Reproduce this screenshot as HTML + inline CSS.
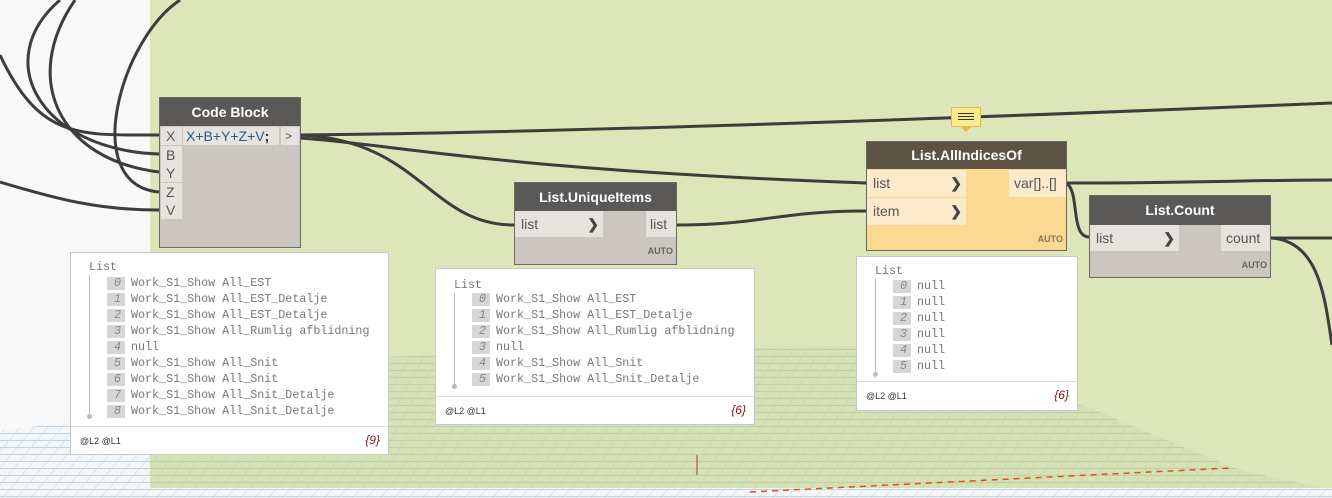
<!DOCTYPE html>
<html><head><meta charset="utf-8">
<style>
*{margin:0;padding:0;box-sizing:border-box}
body{width:1332px;height:498px;overflow:hidden;position:relative;background:#dce6b9;font-family:"Liberation Sans",sans-serif}
.abs{position:absolute}
.node{position:absolute;border:1px solid #6a6a6a;background:#cbc6c0}
.hdr{position:absolute;left:0;right:0;top:0;background:#5b5957;color:#fff;font-weight:bold;font-size:14px;text-align:center}
.port{position:absolute;background:#e6e2dd;color:#555;font-size:14px;padding-left:6px}
.chev{position:absolute;right:4px;top:0;font-weight:bold;color:#444}
.auto{position:absolute;right:3px;font-size:9px;font-weight:bold;color:#666}
.watch{position:absolute;background:#fff;border:1px solid #c8c8c8;font-family:"Liberation Mono",monospace;font-size:11.7px;color:#777}
.watch .row{position:absolute;height:13px;line-height:13px;white-space:pre}
.watch .ix{display:inline-block;width:18px;background:#d6d6d6;text-align:right;padding-right:4px;font-style:italic;margin-right:6px;color:#888}
.foot{position:absolute;left:0;right:0;bottom:0;border-top:1px solid #ddd;font-size:9px;color:#333;font-family:"Liberation Sans",sans-serif}
.cnt{position:absolute;right:8px;font-style:italic;font-size:12px;color:#8a1010;font-family:"Liberation Sans",sans-serif}
</style></head><body>
<svg class="abs" style="left:0;top:0" width="1332" height="498">
<defs>
<pattern id="g" width="14" height="7" patternUnits="userSpaceOnUse" patternTransform="skewX(-30)">
<rect width="14" height="7" fill="#d6e1b6"/><line x1="0" y1="6.5" x2="14" y2="6.5" stroke="#bccfa6" stroke-width="1"/><line x1="0.5" y1="0" x2="0.5" y2="7" stroke="#c8d7ae" stroke-width="1"/></pattern>
<pattern id="b" width="14" height="7" patternUnits="userSpaceOnUse" patternTransform="skewX(-40)">
<rect width="14" height="7" fill="#f4f6f8"/><line x1="0" y1="6.5" x2="14" y2="6.5" stroke="#bcd0e0" stroke-width="1"/><line x1="0.5" y1="0" x2="0.5" y2="7" stroke="#d2dee8" stroke-width="1"/></pattern>
</defs>
<rect x="0" y="0" width="150" height="498" fill="#f8f8f8"/>
<polygon points="150,362 900,345 1040,388 1240,470 1332,490 1332,498 150,498" fill="url(#g)"/>
<polygon points="0,430 150,415 150,498 0,498" fill="url(#b)"/>
<rect x="0" y="488" width="1332" height="10" fill="url(#b)"/>
<path d="M750,492 L1230,468" stroke="#e05020" stroke-width="1.5" stroke-dasharray="6,5" fill="none"/>
<line x1="697" y1="455" x2="697" y2="475" stroke="#c03030" stroke-width="1"/>
<g stroke="#3d3d3d" stroke-width="3" fill="none">
<path d="M0,55 C40,140 80,135 159,135"/>
<path d="M60,0 C-10,60 40,150 159,154"/>
<path d="M75,0 C20,80 60,160 159,172"/>
<path d="M180,0 C120,40 80,185 159,192"/>
<path d="M0,182 C60,200 100,210 159,210"/>
<path d="M300,135 C500,133 800,125 1332,103"/>
<path d="M300,135 C420,140 430,225 514,225"/>
<path d="M300,138 C400,145 500,170 866,183"/>
<path d="M676,225 C760,225 780,211 866,211"/>
<path d="M1066,183 C1200,183 1250,180 1332,180"/>
<path d="M1066,183 C1080,190 1070,237 1089,237"/>
<path d="M1270,238 L1332,238"/>
<path d="M1270,238 C1320,240 1325,300 1332,345"/>
</g>
</svg>
<!-- Code Block -->
<div class="node" style="left:159px;top:97px;width:142px;height:151px">
<div class="hdr" style="height:28px;line-height:28px">Code Block</div>
<div class="port" style="left:1px;top:29px;width:21px;height:18px;line-height:18px;padding-left:5px">X</div>
<div class="port" style="left:1px;top:48px;width:21px;height:36px;line-height:18px;padding-left:5px">B<br>Y</div>
<div class="port" style="left:1px;top:85px;width:21px;height:36px;line-height:18px;padding-left:5px">Z<br>V</div>
<div class="port" style="left:23px;top:29px;width:96px;height:18px;line-height:18px;color:#2a5b8c;padding-left:3px;font-size:14px">X+B+Y+Z+V<b style="color:#222">;</b></div>
<div class="port" style="left:121px;top:29px;width:18px;height:18px;line-height:18px;padding-left:4px;font-size:12px">&gt;</div>
</div>
<!-- UniqueItems -->
<div class="node" style="left:514px;top:182px;width:163px;height:83px">
<div class="hdr" style="height:28px;line-height:28px">List.UniqueItems</div>
<div class="port" style="left:0;top:28px;width:88px;height:26px;line-height:26px">list<span class="chev">&#x276F;</span></div>
<div class="port" style="right:0;top:28px;width:30px;height:26px;line-height:26px;padding-left:4px">list</div>
<div class="auto" style="top:63px">AUTO</div>
</div>
<!-- AllIndicesOf -->
<div class="node" style="left:866px;top:141px;width:201px;height:110px;background:#fad993">
<div class="hdr" style="height:27px;line-height:27px;background:#5d5342">List.AllIndicesOf</div>
<div class="port" style="left:0;top:28px;width:99px;height:27px;line-height:27px;background:#fcebca">list<span class="chev">&#x276F;</span></div>
<div class="port" style="left:0;top:56px;width:99px;height:27px;line-height:27px;background:#fcebca">item<span class="chev">&#x276F;</span></div>
<div class="port" style="right:0;top:28px;width:57px;height:27px;line-height:27px;background:#fcebca;padding-left:5px">var[]..[]</div>
<div class="auto" style="top:92px;color:#8a7550">AUTO</div>
</div>
<!-- Note -->
<div class="abs" style="left:951px;top:107px;width:30px;height:20px;background:#fbeb8c;border:1px solid #e8b850"></div>
<div class="abs" style="left:960px;top:126px;width:0;height:0;border-left:6px solid transparent;border-right:6px solid transparent;border-top:6px solid #e8b850"></div>
<div class="abs" style="left:958px;top:113px;width:16px;height:1px;background:#333;box-shadow:0 3px 0 #333,0 6px 0 #333"></div>
<!-- Count -->
<div class="node" style="left:1089px;top:195px;width:182px;height:83px">
<div class="hdr" style="height:29px;line-height:29px">List.Count</div>
<div class="port" style="left:0;top:29px;width:89px;height:26px;line-height:26px">list<span class="chev">&#x276F;</span></div>
<div class="port" style="right:0;top:29px;width:49px;height:26px;line-height:26px;padding-left:5px">count</div>
<div class="auto" style="top:64px">AUTO</div>
</div>
<!-- Watch 1 -->
<div class="watch" style="left:70px;top:252px;width:319px;height:203px">
<div class="row" style="left:18px;top:8px">List</div>
<div class="abs" style="left:18px;top:22px;width:1px;height:140px;background:#bbb"></div>
<div class="abs" style="left:16px;top:161px;width:5px;height:5px;border-radius:3px;background:#bbb"></div>
<div class="row" style="left:36px;top:24px"><span class="ix">0</span>Work_S1_Show All_EST</div>
<div class="row" style="left:36px;top:40px"><span class="ix">1</span>Work_S1_Show All_EST_Detalje</div>
<div class="row" style="left:36px;top:56px"><span class="ix">2</span>Work_S1_Show All_EST_Detalje</div>
<div class="row" style="left:36px;top:72px"><span class="ix">3</span>Work_S1_Show All_Rumlig afblidning</div>
<div class="row" style="left:36px;top:88px"><span class="ix">4</span>null</div>
<div class="row" style="left:36px;top:104px"><span class="ix">5</span>Work_S1_Show All_Snit</div>
<div class="row" style="left:36px;top:120px"><span class="ix">6</span>Work_S1_Show All_Snit</div>
<div class="row" style="left:36px;top:136px"><span class="ix">7</span>Work_S1_Show All_Snit_Detalje</div>
<div class="row" style="left:36px;top:152px"><span class="ix">8</span>Work_S1_Show All_Snit_Detalje</div>
<div class="foot" style="height:28px"><span class="abs" style="left:9px;top:9px">@L2 @L1</span><span class="cnt" style="top:6px">{9}</span></div>
</div>
<!-- Watch 2 -->
<div class="watch" style="left:435px;top:268px;width:320px;height:157px">
<div class="row" style="left:18px;top:10px">List</div>
<div class="abs" style="left:18px;top:24px;width:1px;height:92px;background:#bbb"></div>
<div class="abs" style="left:16px;top:115px;width:5px;height:5px;border-radius:3px;background:#bbb"></div>
<div class="row" style="left:36px;top:24px"><span class="ix">0</span>Work_S1_Show All_EST</div>
<div class="row" style="left:36px;top:40px"><span class="ix">1</span>Work_S1_Show All_EST_Detalje</div>
<div class="row" style="left:36px;top:56px"><span class="ix">2</span>Work_S1_Show All_Rumlig afblidning</div>
<div class="row" style="left:36px;top:72px"><span class="ix">3</span>null</div>
<div class="row" style="left:36px;top:88px"><span class="ix">4</span>Work_S1_Show All_Snit</div>
<div class="row" style="left:36px;top:104px"><span class="ix">5</span>Work_S1_Show All_Snit_Detalje</div>
<div class="foot" style="height:28px"><span class="abs" style="left:9px;top:9px">@L2 @L1</span><span class="cnt" style="top:6px">{6}</span></div>
</div>
<!-- Watch 3 -->
<div class="watch" style="left:856px;top:256px;width:222px;height:155px">
<div class="row" style="left:18px;top:8px">List</div>
<div class="abs" style="left:18px;top:22px;width:1px;height:94px;background:#bbb"></div>
<div class="abs" style="left:16px;top:115px;width:5px;height:5px;border-radius:3px;background:#bbb"></div>
<div class="row" style="left:36px;top:23px"><span class="ix">0</span>null</div>
<div class="row" style="left:36px;top:39px"><span class="ix">1</span>null</div>
<div class="row" style="left:36px;top:55px"><span class="ix">2</span>null</div>
<div class="row" style="left:36px;top:71px"><span class="ix">3</span>null</div>
<div class="row" style="left:36px;top:87px"><span class="ix">4</span>null</div>
<div class="row" style="left:36px;top:103px"><span class="ix">5</span>null</div>
<div class="foot" style="height:29px"><span class="abs" style="left:9px;top:9px">@L2 @L1</span><span class="cnt" style="top:6px">{6}</span></div>
</div>
</body></html>
